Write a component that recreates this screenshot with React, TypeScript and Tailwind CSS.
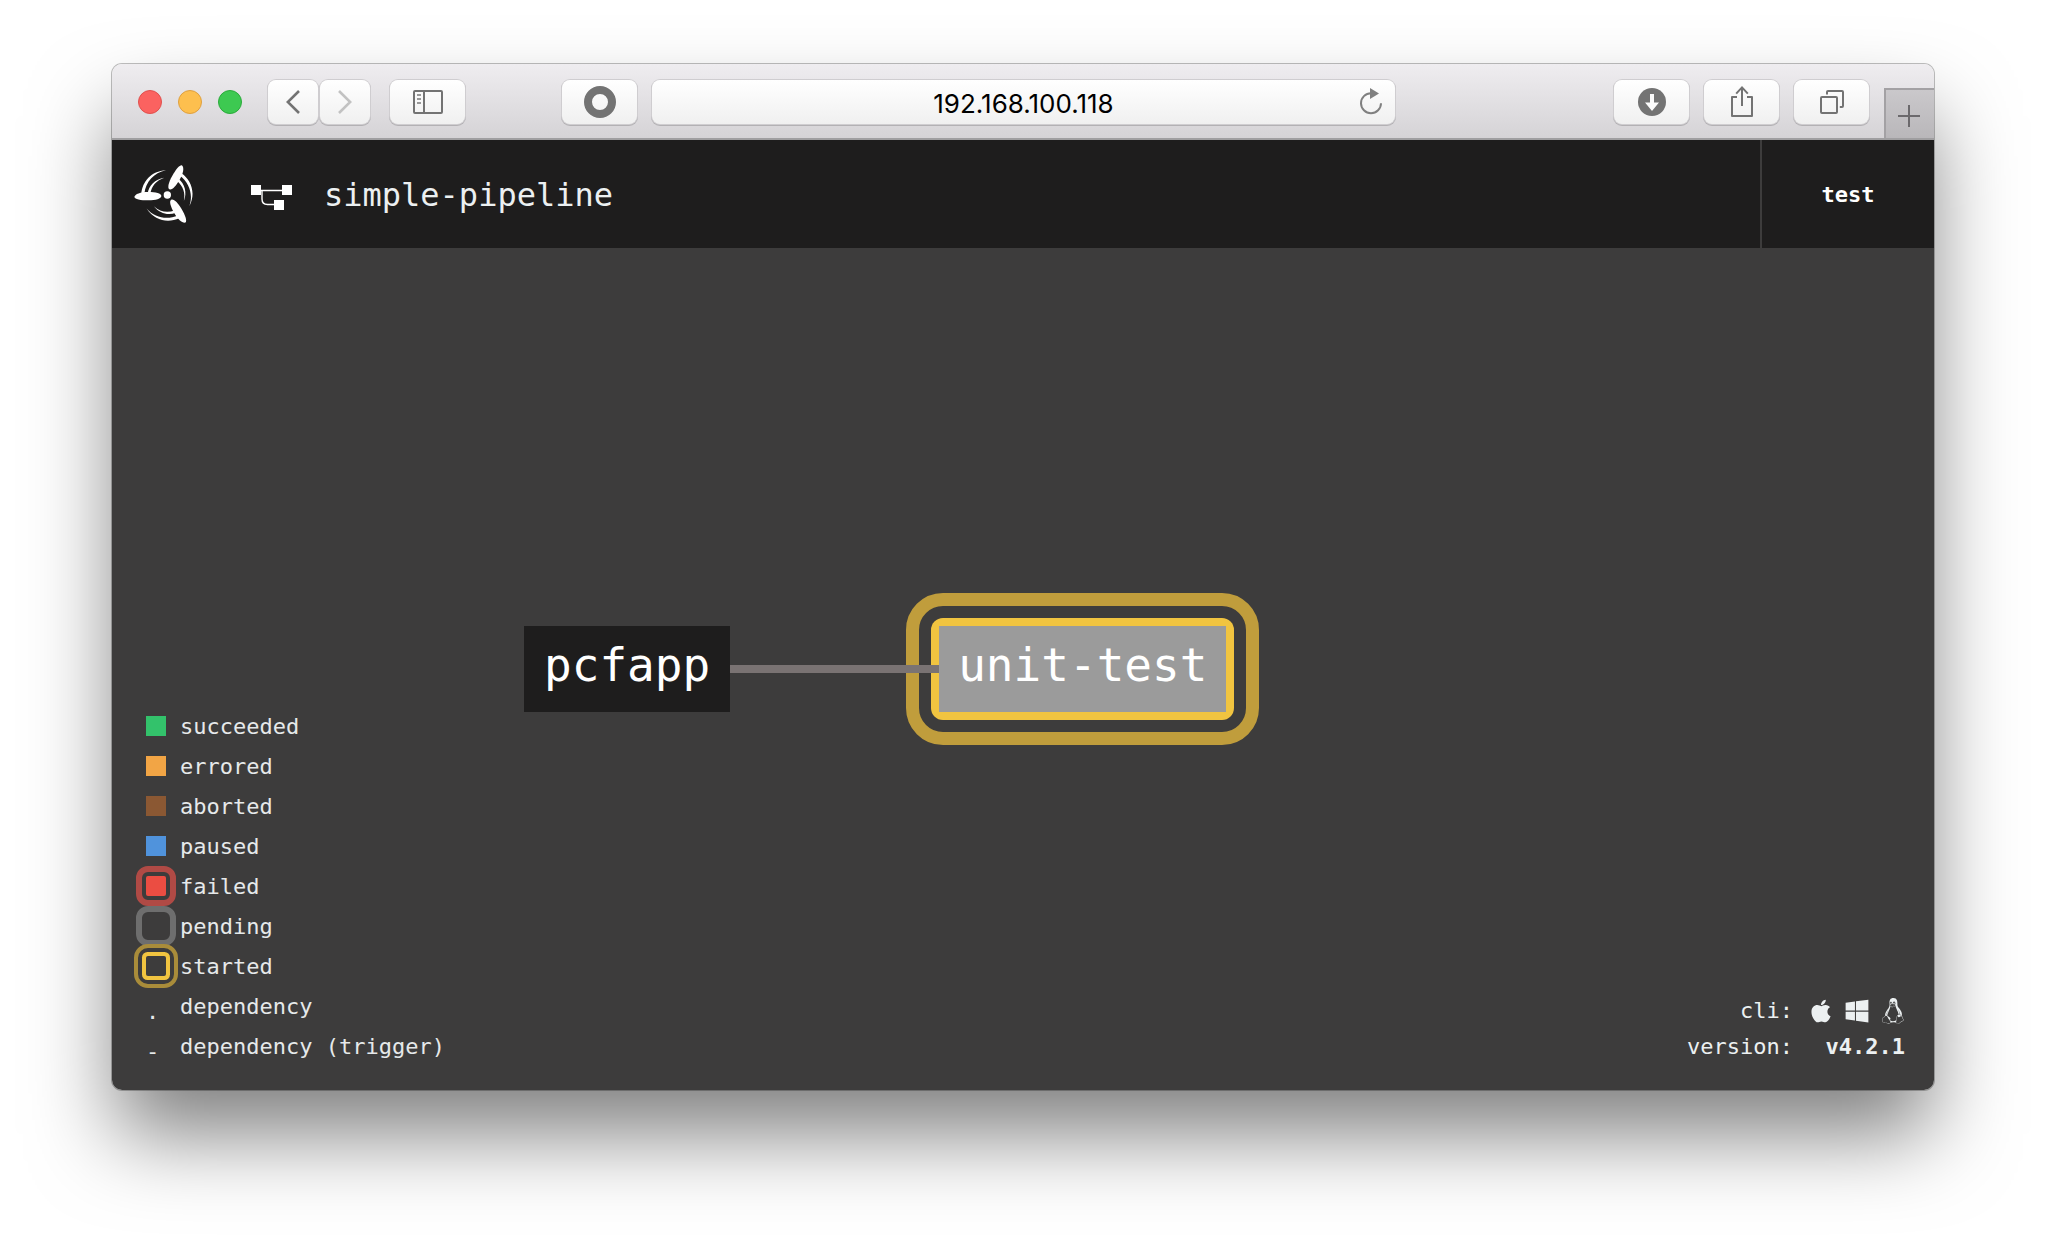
import type { ReactNode } from "react";
import { FaApple, FaLinux, FaWindows } from "react-icons/fa";

function ToolbarButton({
  label,
  size = "w-[75px]",
  children,
}: {
  label: string;
  size?: string;
  children: ReactNode;
}) {
  return (
    <button
      type="button"
      aria-label={label}
      className={`${size} flex h-11 shrink-0 items-center justify-center rounded-lg bg-linear-to-b from-white to-[#f0f0f0] text-[#737373] shadow-[0_0_0_1px_#cfcdd0,0_1px_0_1px_#b3b1b4]`}
    >
      {children}
    </button>
  );
}

function BrowserToolbar() {
  return (
    <div className="flex h-[76px] items-center border-b-2 border-[#9f9ea0] bg-linear-to-b from-[#efedf0] to-[#d5d3d6] pt-0.5 pl-[26px]">
      <div className="flex shrink-0 gap-4">
        <button type="button" aria-label="Close" className="size-6 rounded-full border border-[#e0504e] bg-[#fb6260]" />
        <button type="button" aria-label="Minimize" className="size-6 rounded-full border border-[#dfa040] bg-[#fdbf4e]" />
        <button type="button" aria-label="Zoom" className="size-6 rounded-full border border-[#2bab3b] bg-[#3dc951]" />
      </div>

      <div className="ml-[26px] flex shrink-0 gap-0.5">
        <ToolbarButton label="Back" size="w-[50px]">
          <svg width="14" height="24" viewBox="0 0 14 24" fill="none" stroke="currentColor" strokeWidth="2.6">
            <path d="M13 1 1.8 12 13 23" />
          </svg>
        </ToolbarButton>
        <ToolbarButton label="Forward" size="w-[50px]">
          <svg width="14" height="24" viewBox="0 0 14 24" fill="none" stroke="#c2c2c2" strokeWidth="2.6">
            <path d="m1 1 11.2 11L1 23" />
          </svg>
        </ToolbarButton>
      </div>

      <div className="ml-5 flex shrink-0">
        <ToolbarButton label="Show sidebar">
          <svg width="30" height="24" viewBox="0 0 30 24" fill="none" stroke="currentColor" strokeWidth="2">
            <rect x="1" y="1" width="28" height="22" rx="1" />
            <path d="M11 1v22" />
            <path d="M4 5h4M4 9h4M4 13h4" stroke="#999" />
          </svg>
        </ToolbarButton>
      </div>

      <div className="flex-[97]" />
      <ToolbarButton label="Extension">
        <svg width="32" height="32" viewBox="0 0 32 32" fill="none" stroke="currentColor" strokeWidth="8">
          <circle cx="16" cy="16" r="12" />
        </svg>
      </ToolbarButton>
      <div className="relative ml-[15px] h-11 flex-[743] rounded-lg bg-linear-to-b from-white to-[#f0f0f0] shadow-[0_0_0_1px_#cfcdd0,0_1px_0_1px_#b3b1b4]">
        <input
          aria-label="Address"
          defaultValue="192.168.100.118"
          className="size-full px-12 pt-0.5 text-center font-['Inter',sans-serif] text-[26px] text-black outline-none"
        />
        <button type="button" aria-label="Reload" className="absolute inset-y-0 right-3 flex items-center text-[#808080]">
          <svg width="24" height="28" viewBox="0 0 24 28">
            <path d="M12 5.2A10 10 0 1 0 22 15.2" fill="none" stroke="currentColor" strokeWidth="2" />
            <path d="m11 0 9 5.4-9 5.6Z" fill="currentColor" />
          </svg>
        </button>
      </div>
      <div className="flex-[219]" />

      <div className="flex shrink-0 gap-[15px]">
        <ToolbarButton label="Downloads">
          <svg width="28" height="28" viewBox="0 0 28 28">
            <circle cx="14" cy="14" r="14" fill="currentColor" />
            <path d="M12 6h4v8.500h5L14 23l-7-8.500h5Z" fill="#fafafa" />
          </svg>
        </ToolbarButton>
        <ToolbarButton label="Share">
          <svg width="24" height="32" viewBox="0 0 24 32" fill="none" stroke="currentColor" strokeWidth="2" className="mb-0.5">
            <path d="M7 12H2v19h20V12h-5" strokeLinejoin="round" />
            <path d="M12 21V2.4M6.2 8.6 12 2.4l5.8 6.2" />
          </svg>
        </ToolbarButton>
        <ToolbarButton label="Show all tabs">
          <svg width="24" height="24" viewBox="0 0 24 24" fill="none" stroke="currentColor" strokeWidth="2">
            <rect x="1" y="7" width="16" height="16" rx="1" />
            <path d="M7 4.500V2q0-1 1-1h14q1 0 1 1v14q0 1-1 1h-2.200" />
          </svg>
        </ToolbarButton>
      </div>

      <button
        type="button"
        aria-label="New tab"
        className="ml-[15px] flex size-[50px] shrink-0 items-center justify-center self-end border-t-2 border-l-2 border-[#a3a1a4] bg-linear-to-b from-[#cac8cb] to-[#b9b7ba] pt-1 pr-0.5 text-[#6b696c]"
      >
        <svg width="22" height="22" viewBox="0 0 22 22" stroke="currentColor" strokeWidth="2">
          <path d="M11 0v22M0 11h22" />
        </svg>
      </button>
    </div>
  );
}

function Blade() {
  return (
    <>
      <path d="M42 140C44 131 60 125 84 125c22 0 39 4 39 12s-17 13-39 13c-24 0-40-3-42-10Z" />
      <path d="M63 130C66 95 92 62 137 60 100 67 76 96 72 130Z" />
      <path d="M82 130C85 106 104 86 132 82 108 90 94 106 90 130Z" />
    </>
  );
}

function PropellerLogo() {
  return (
    <svg width="60" height="60" viewBox="41 41 180 180" fill="white" aria-hidden="true">
      <Blade />
      <g transform="rotate(120 141 134)">
        <Blade />
      </g>
      <g transform="rotate(240 141 134)">
        <Blade />
      </g>
      <circle cx="141" cy="134" r="11" />
    </svg>
  );
}

function PipelineIcon() {
  return (
    <svg width="41" height="25" viewBox="0 0 41 25" fill="none" className="mt-1" aria-hidden="true">
      <path d="M10 5.500H31M11 5.500V14Q11 19.500 16.500 19.500H23" stroke="white" strokeWidth="1.4" />
      <g fill="white">
        <rect width="10" height="10" />
        <rect x="31" width="10" height="10" />
        <rect x="23" y="15" width="10" height="10" />
      </g>
    </svg>
  );
}

function PipelineHeader() {
  return (
    <header className="flex h-[108px] items-stretch bg-[#1e1d1d]">
      <a href="#home" aria-label="Home" className="flex items-center pl-[22px]">
        <PropellerLogo />
      </a>
      <a href="#pipeline" className="ml-[57px] flex items-center gap-8 pt-0.5 text-[32px] text-[#ecf0f1]">
        <PipelineIcon />
        simple-pipeline
      </a>
      <button type="button" className="ml-auto w-[174px] border-l-2 border-[#3d3c3c] text-[22px] font-bold text-white">
        test
      </button>
    </header>
  );
}

const legend = [
  { label: "succeeded", swatch: "bg-[#33c26b]" },
  { label: "errored", swatch: "bg-[#f2a545]" },
  { label: "aborted", swatch: "bg-[#8b5833]" },
  { label: "paused", swatch: "bg-[#5093dc]" },
  { label: "failed", swatch: "rounded-xs bg-[#eb4d42] outline-6 outline-offset-4 outline-[#b04a45]" },
  { label: "pending", swatch: "rounded-xs outline-6 outline-offset-4 outline-[#6e6e6e]" },
  {
    label: "started",
    swatch: "rounded-xs shadow-[0_0_0_4px_#f1c440] outline-4 outline-offset-8 outline-[#a98c3a]",
  },
  { label: "dependency", mark: "." },
  { label: "dependency (trigger)", mark: "-" },
];

function Legend() {
  return (
    <ul className="col-start-1 row-start-1 self-end justify-self-start pb-6 pl-[34px] text-[22px] text-[#e6e9ea]">
      {legend.map((item) => (
        <li key={item.label} className="flex h-10 items-center gap-3.5">
          {item.mark ? (
            <span className="w-5 pt-3 leading-7">{item.mark}</span>
          ) : (
            <span className={`size-5 ${item.swatch}`} />
          )}
          {item.label}
        </li>
      ))}
    </ul>
  );
}

function PipelineGraph() {
  return (
    <div className="col-start-1 row-start-1 flex items-center pl-[412px] text-[46px] leading-[78px] text-white">
      <a href="#pcfapp" className="bg-[#1e1d1d] px-5 pb-2">
        pcfapp
      </a>
      <div className="z-10 h-2 w-[209px] bg-[#7a7373]" />
      <div className="-ml-2 rounded-xl bg-[#f1c440] p-2 outline-[13px] outline-offset-12 outline-[#c09d3c]">
        <a href="#unit-test" className="block bg-[#9b9b9b] px-[19px] pb-2">
          unit-test
        </a>
      </div>
    </div>
  );
}

function CliInfo() {
  return (
    <dl className="col-start-1 row-start-1 grid grid-cols-[auto_auto] items-center gap-x-4 self-end justify-self-end pr-[29px] pb-[25px] text-right text-[22px] leading-9 text-[#ecf0f1]">
      <dt>cli:</dt>
      <dd className="flex items-center justify-end gap-3">
        <a href="#darwin" aria-label="Download for macOS">
          <FaApple className="h-[26px] w-6" />
        </a>
        <a href="#windows" aria-label="Download for Windows">
          <FaWindows className="h-[26px] w-6" />
        </a>
        <a href="#linux" aria-label="Download for Linux">
          <FaLinux className="h-[26px] w-6" />
        </a>
      </dd>
      <dt>version:</dt>
      <dd className="font-bold">v4.2.1</dd>
    </dl>
  );
}

export default function App() {
  return (
    <div className="flex min-h-screen flex-col bg-white px-28 pt-16 pb-40 font-['DejaVu_Sans_Mono',monospace]">
      <div className="flex flex-1 flex-col overflow-hidden rounded-[10px] shadow-[0_0_0_1px_rgba(0,0,0,0.25),0_48px_84px_-4px_rgba(0,0,0,0.5)]">
        <BrowserToolbar />
        <PipelineHeader />
        <main className="grid flex-1 bg-[#3d3c3c]">
          <PipelineGraph />
          <Legend />
          <CliInfo />
        </main>
      </div>
    </div>
  );
}
